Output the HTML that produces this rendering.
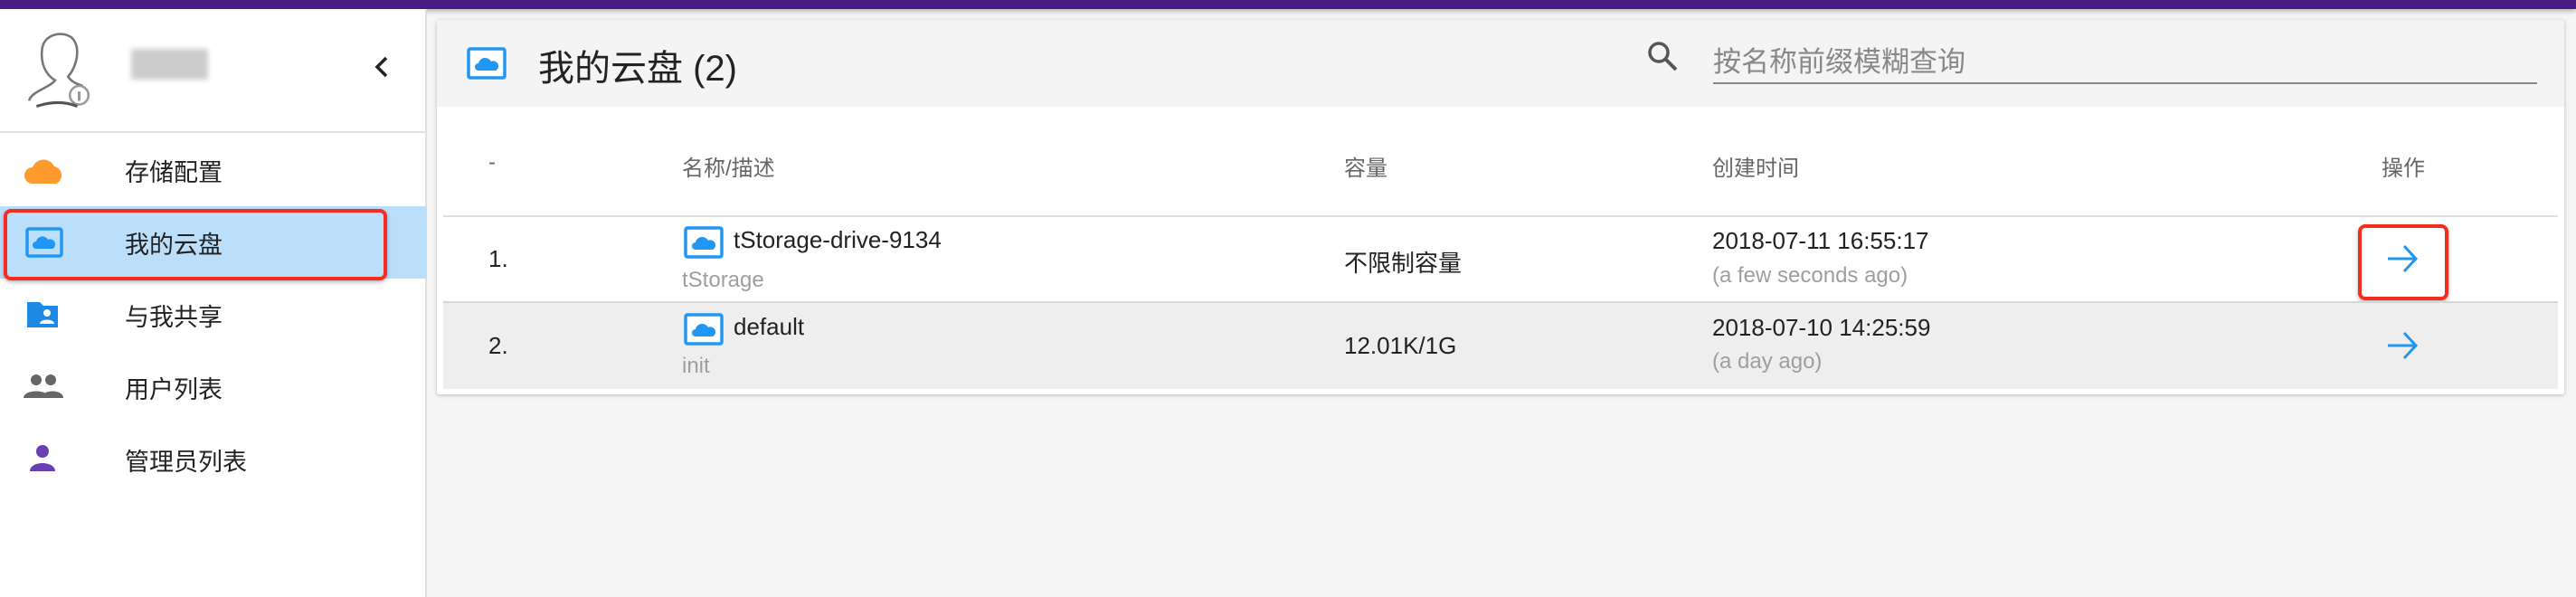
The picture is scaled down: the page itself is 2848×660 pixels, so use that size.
<!DOCTYPE html>
<html><head><meta charset="utf-8"><style>
*{margin:0;padding:0;box-sizing:border-box}
body{width:2848px;height:660px;overflow:hidden;background:#f5f5f5;font-family:"Liberation Sans","Noto Sans CJK SC",sans-serif;color:#222;position:relative}
.a{position:absolute;white-space:nowrap}
.top{left:0;top:0;width:2848px;height:10px;background:#4a1a87;box-shadow:0 2px 6px rgba(0,0,0,.3)}
.side{left:0;top:10px;width:472px;height:650px;background:#fff;border-right:2px solid #e0e0e0}
.mi{font-size:27px;left:138px;color:#222}
.card{left:483px;top:22px;width:2352px;height:414px;background:#fff;box-shadow:0 1px 4px rgba(0,0,0,.25);border-radius:3px}
.hd{font-size:24px;color:#666}
.t{font-size:26px;color:#222}
.s{font-size:24px;color:#9e9e9e}
</style></head><body>
<div class="a top"></div>
<div class="a side"></div>
<svg class="a" style="left:24px;top:30px" width="82" height="90" viewBox="0 0 80 85"><path d="M8 78 C10 68 30 64 36 56 C26 50 20 38 22 22 C24 6 44 2 54 10 C64 20 60 40 50 52 C54 58 60 60 66 62" fill="none" stroke="#777" stroke-width="2.5"/><circle cx="62" cy="72" r="10" fill="none" stroke="#999" stroke-width="2.5"/><path d="M62 68v10" stroke="#999" stroke-width="3"/><path d="M16 84 Q40 76 60 84" stroke="#555" stroke-width="3" fill="none"/></svg>
<div class="a" style="left:145px;top:54px;width:85px;height:34px;background:#ccc;filter:blur(3px)"></div>
<svg class="a" style="left:410px;top:60px" width="24" height="28" viewBox="0 0 24 28"><path d="M17 4L7 14l10 10" fill="none" stroke="#222" stroke-width="3.5"/></svg>
<div class="a" style="left:0;top:145px;width:472px;height:2px;background:#e0e0e0"></div>
<svg class="a" style="left:26px;top:172px" width="46" height="32" viewBox="0 0 46 32"><path d="M10 31 A9 9 0 0 1 10 13 A13 13 0 0 1 34 12 A10 10 0 0 1 36 31Z" fill="#ff9a2e"/></svg>
<div class="a mi" style="top:169px">存储配置</div>
<div class="a" style="left:0;top:228px;width:472px;height:80px;background:#bbdefb"></div>
<div class="a" style="left:4px;top:231px;width:424px;height:79px;border:4px solid #f42d1f;border-radius:8px;box-shadow:0 2px 4px rgba(0,0,0,.3)"></div>
<svg class="a" style="left:28px;top:251px" width="42" height="34" viewBox="0 0 42 34"><rect x="2" y="2" width="38" height="30" rx="2" fill="none" stroke="#2196f3" stroke-width="3.5"/><path d="M12 24a4 4 0 0 1 0-8 a7 7 0 0 1 13-2 a5 5 0 0 1 5 10z" fill="#2196f3"/></svg>
<div class="a mi" style="top:249px">我的云盘</div>
<svg class="a" style="left:28px;top:330px" width="40" height="34" viewBox="0 0 40 34"><path d="M2 4h14l4 4h16v24H2z" fill="#1e88e5"/><circle cx="24" cy="16" r="4" fill="#fff"/><path d="M16 28c0-6 16-6 16 0z" fill="#fff"/></svg>
<div class="a mi" style="top:329px">与我共享</div>
<svg class="a" style="left:26px;top:412px" width="44" height="30" viewBox="0 0 44 30"><circle cx="14" cy="8" r="6" fill="#666"/><circle cx="30" cy="8" r="6" fill="#666"/><path d="M0 28c0-10 28-10 28 0z" fill="#666"/><path d="M20 28c0-10 24-10 24 0z" fill="#666"/></svg>
<div class="a mi" style="top:409px">用户列表</div>
<svg class="a" style="left:32px;top:490px" width="30" height="32" viewBox="0 0 30 32"><circle cx="15" cy="9" r="7" fill="#6a3fb5"/><path d="M1 31c0-12 28-12 28 0z" fill="#6a3fb5"/></svg>
<div class="a mi" style="top:489px">管理员列表</div>
<div class="a card"></div>
<div class="a" style="left:483px;top:22px;width:2352px;height:96px;background:#f4f4f4;border-radius:3px 3px 0 0"></div>
<svg class="a" style="left:516px;top:52px" width="44" height="36" viewBox="0 0 44 36"><rect x="2" y="2" width="40" height="32" rx="2" fill="#fff" stroke="#2196f3" stroke-width="3.5"/><path d="M13 26a4 4 0 0 1 0-8 a7.5 7.5 0 0 1 14-2 a5 5 0 0 1 5 10z" fill="#2196f3"/></svg>
<div class="a" style="left:595px;top:43px;font-size:40px;color:#222">我的云盘 (2)</div>
<svg class="a" style="left:1820px;top:44px" width="36" height="36" viewBox="0 0 36 36"><circle cx="14" cy="14" r="10" fill="none" stroke="#555" stroke-width="3.5"/><path d="M21 21l12 12" stroke="#555" stroke-width="4"/></svg>
<div class="a" style="left:1894px;top:43px;font-size:31px;color:#888">按名称前缀模糊查询</div>
<div class="a" style="left:1894px;top:91px;width:911px;height:2px;background:#888"></div>
<div class="a hd" style="left:540px;top:166px">-</div>
<div class="a hd" style="left:754px;top:166px">名称/描述</div>
<div class="a hd" style="left:1486px;top:166px">容量</div>
<div class="a hd" style="left:1893px;top:166px">创建时间</div>
<div class="a hd" style="left:2633px;top:166px">操作</div>
<div class="a" style="left:490px;top:238px;width:2338px;height:2px;background:#e0e0e0"></div>
<div class="a t" style="left:540px;top:271px">1.</div>
<svg class="a" style="left:756px;top:250px" width="44" height="36" viewBox="0 0 44 36"><rect x="2" y="2" width="40" height="32" rx="2" fill="#fff" stroke="#2196f3" stroke-width="3.5"/><path d="M13 26a4 4 0 0 1 0-8 a7.5 7.5 0 0 1 14-2 a5 5 0 0 1 5 10z" fill="#2196f3"/></svg>
<div class="a t" style="left:811px;top:250px">tStorage-drive-9134</div>
<div class="a s" style="left:754px;top:296px">tStorage</div>
<div class="a t" style="left:1486px;top:271px">不限制容量</div>
<div class="a t" style="left:1893px;top:251px">2018-07-11 16:55:17</div>
<div class="a s" style="left:1893px;top:291px">(a few seconds ago)</div>
<svg class="a" style="left:2638px;top:268px" width="36" height="36" viewBox="0 0 36 36"><path d="M2 18h30M20 4l13 14-13 14" fill="none" stroke="#2196f3" stroke-width="3"/></svg>
<div class="a" style="left:2607px;top:248px;width:100px;height:84px;border:4px solid #f42d1f;border-radius:8px;box-shadow:0 2px 4px rgba(0,0,0,.3)"></div>
<div class="a" style="left:490px;top:333px;width:2338px;height:2px;background:#d6d6d6"></div>
<div class="a" style="left:490px;top:335px;width:2338px;height:95px;background:#eeeeee"></div>
<div class="a t" style="left:540px;top:367px">2.</div>
<svg class="a" style="left:756px;top:346px" width="44" height="36" viewBox="0 0 44 36"><rect x="2" y="2" width="40" height="32" rx="2" fill="#fff" stroke="#2196f3" stroke-width="3.5"/><path d="M13 26a4 4 0 0 1 0-8 a7.5 7.5 0 0 1 14-2 a5 5 0 0 1 5 10z" fill="#2196f3"/></svg>
<div class="a t" style="left:811px;top:346px">default</div>
<div class="a s" style="left:754px;top:391px">init</div>
<div class="a t" style="left:1486px;top:367px">12.01K/1G</div>
<div class="a t" style="left:1893px;top:347px">2018-07-10 14:25:59</div>
<div class="a s" style="left:1893px;top:386px">(a day ago)</div>
<svg class="a" style="left:2638px;top:364px" width="36" height="36" viewBox="0 0 36 36"><path d="M2 18h30M20 4l13 14-13 14" fill="none" stroke="#2196f3" stroke-width="3"/></svg>
</body></html>
